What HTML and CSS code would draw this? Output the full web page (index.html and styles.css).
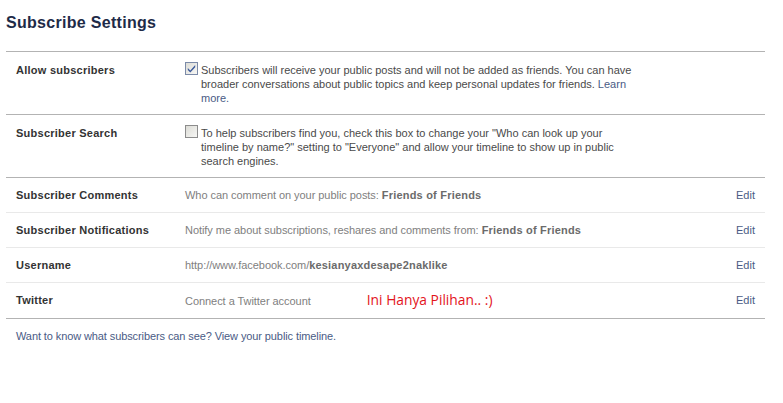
FILE: index.html
```html
<!DOCTYPE html>
<html lang="en">
<head>
<meta charset="UTF-8">
<title>Subscribe Settings</title>
<link rel="stylesheet" href="styles.css">
</head>
<body>
    <div class="page">
        <h2 class="title">Subscribe Settings</h2>

        <div class="settings">
            <!-- Sections avec case à cocher -->
            <div class="row section">
                <div class="label">Allow subscribers</div>
                <div class="value check-value">
                    <span class="checkbox checked">
                        <svg width="9" height="9" viewBox="0 0 9 9"><path d="M0.8 4 L3.3 6.4 L8.2 1 L8.2 3.2 L3.3 8.5 L0.8 6.1 Z" fill="#3c5a9a"/></svg>
                    </span>
                    <p class="desc">Subscribers will receive your public posts and will not be added as friends. You can have broader conversations about public topics and keep personal updates for friends. <a href="#">Learn more.</a></p>
                </div>
                <div class="edit"></div>
            </div>

            <div class="row section">
                <div class="label">Subscriber Search</div>
                <div class="value check-value">
                    <span class="checkbox"></span>
                    <p class="desc">To help subscribers find you, check this box to change your "Who can look up your timeline by name?" setting to "Everyone" and allow your timeline to show up in public search engines.</p>
                </div>
                <div class="edit"></div>
            </div>

            <!-- Lignes simples -->
            <div class="row section">
                <div class="label">Subscriber Comments</div>
                <div class="value">Who can comment on your public posts: <b>Friends of Friends</b></div>
                <a class="edit" href="#">Edit</a>
            </div>
            <div class="row">
                <div class="label">Subscriber Notifications</div>
                <div class="value">Notify me about subscriptions, reshares and comments from: <b>Friends of Friends</b></div>
                <a class="edit" href="#">Edit</a>
            </div>
            <div class="row">
                <div class="label">Username</div>
                <div class="value">http://www.facebook.com/<b>kesianyaxdesape2naklike</b></div>
                <a class="edit" href="#">Edit</a>
            </div>
            <div class="row">
                <div class="label">Twitter</div>
                <div class="value">Connect a Twitter account <span class="note">Ini Hanya Pilihan.. :)</span></div>
                <a class="edit" href="#">Edit</a>
            </div>
        </div>

        <p class="footer"><a href="#">Want to know what subscribers can see? View your public timeline.</a></p>
    </div>
</body>
</html>
```

FILE: styles.css
```css
/* Styles généraux */
body {
    margin: 0;
    padding: 0;
    background: #fff;
    font-family: "Liberation Sans", Arial, sans-serif;
    font-size: 11px;
    color: #333;
}

a {
    color: #4a5b85;
    text-decoration: none;
}

.page {
    width: 759px;
    padding: 13px 0 0 6px;
}

.title {
    margin: 0 0 18px;
    font-size: 16px;
    line-height: 20px;
    letter-spacing: 0.3px;
    color: #1e2b48;
}

/* Lignes des réglages */
.settings {
    border-bottom: 1px solid #b3b3b3;
}

.row {
    display: grid;
    grid-template-columns: 169px 1fr auto;
    padding: 10px 10px;
    line-height: 14px;
    border-top: 1px solid #e9e9e9;
}
.row.section {
    border-top-color: #b3b3b3;
}
.row:has(.check-value) {
    padding: 11px 10px 9px;
}

.label {
    font-weight: bold;
    letter-spacing: 0.25px;
    color: #333;
}

.value {
    color: #808080;
    letter-spacing: -0.05px;
}
.value b {
    color: #6b6b6b;
    letter-spacing: 0.2px;
}

.check-value {
    display: flex;
    align-items: flex-start;
    gap: 3px;
    letter-spacing: 0;
}

.desc {
    margin: 0;
    width: 435px;
    color: #4a4a4a;
}

/* Case à cocher façon XP */
.checkbox {
    flex: none;
    width: 11px;
    height: 11px;
    margin-top: -1px;
    border: 1px solid #8c8c8c;
    background: linear-gradient(135deg, #dcdcd6, #f7f7f5);
    display: flex;
    align-items: center;
    justify-content: center;
}
.checkbox.checked {
    border-color: #7b8aa8;
}

.note {
    margin-left: 53px;
    font-family: "Open Sans", sans-serif;
    font-size: 13.8px;
    line-height: 14px;
    letter-spacing: 0;
    color: #e3141b;
}

.edit {
    min-width: 19px;
    text-align: right;
}

.footer {
    margin: 10px 0 0;
    padding-left: 10px;
    line-height: 14px;
    letter-spacing: -0.1px;
}
```
